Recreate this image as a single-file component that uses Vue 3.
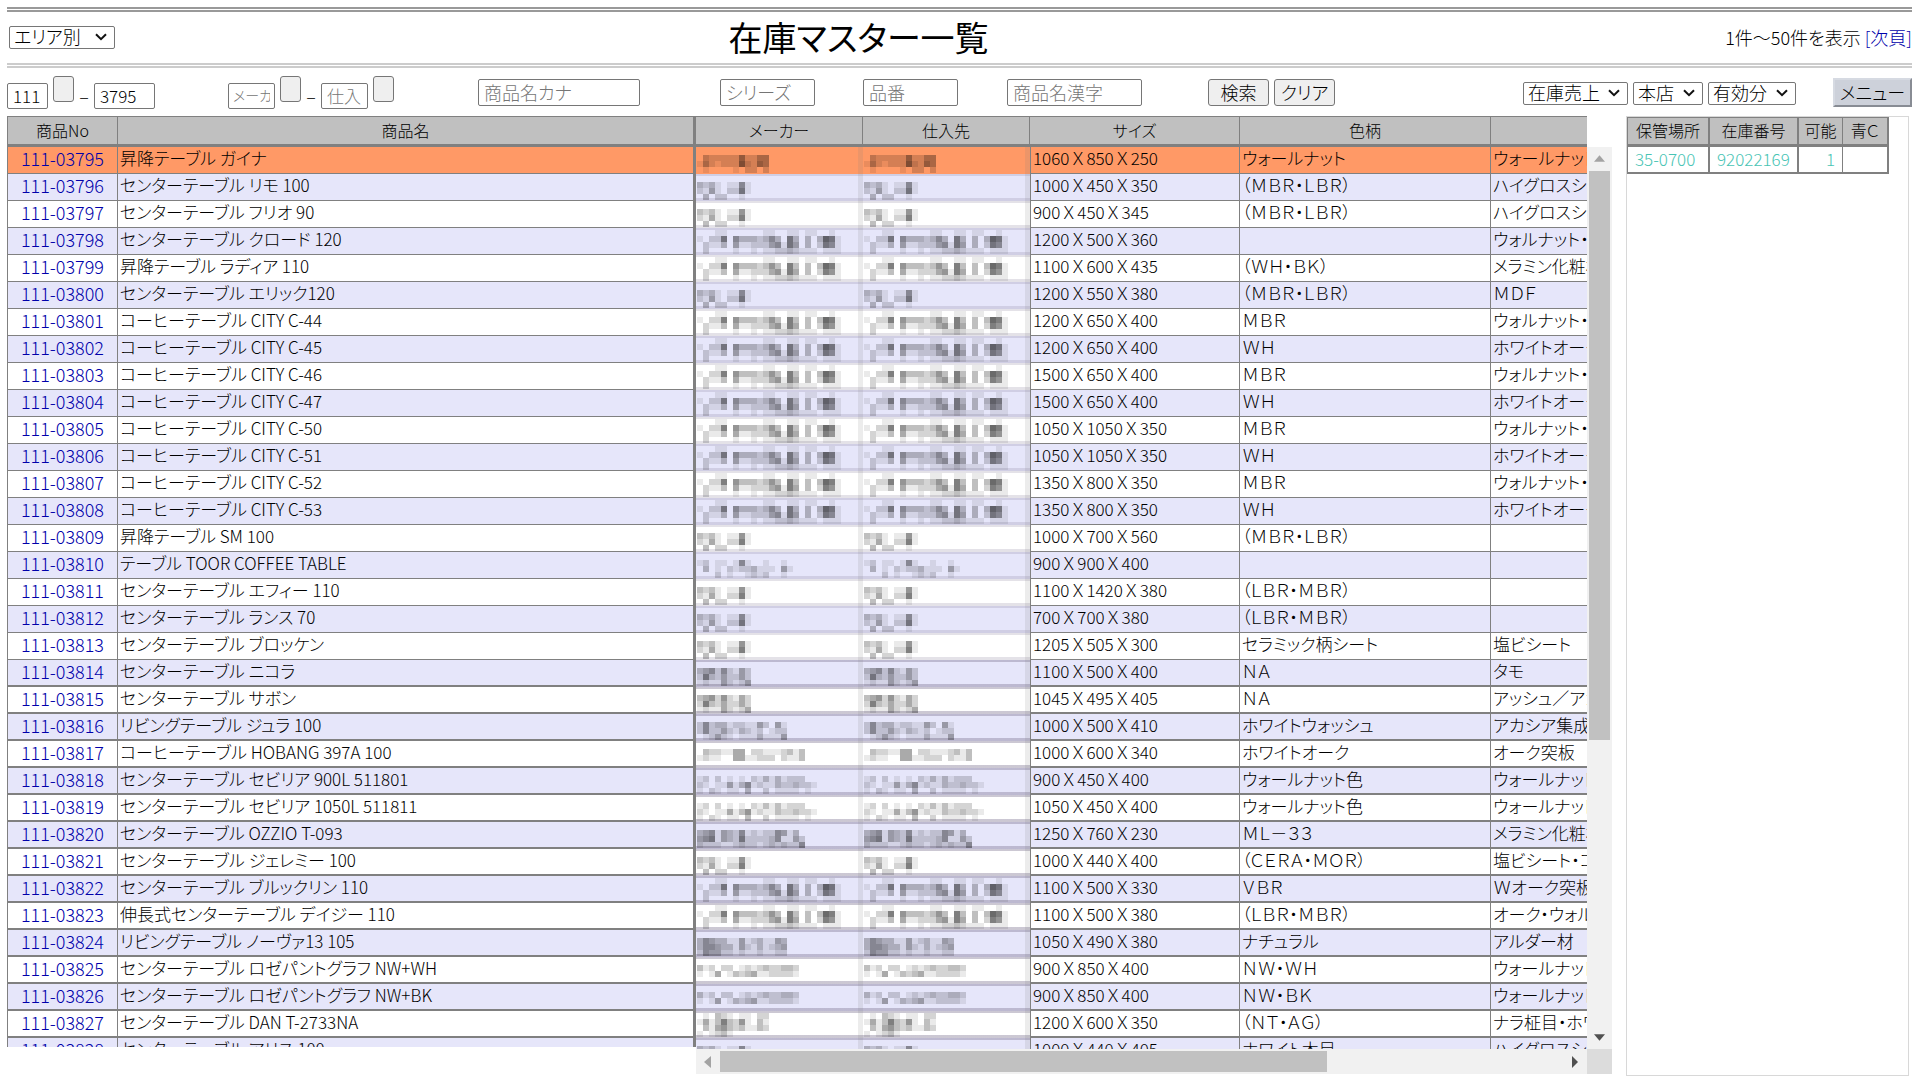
<script setup>
import { ref } from 'vue'

const code = ref('111')
const item = ref('3795')

// Masked supplier names: each digit is the darkness of one block.
const masks = {
  a: ['000000000000', '032222252244', '142122263254', '010000102202'],
  b: ['00000000', '323101151', '214102261', '030220010'],
  c: ['00011000000110011011001', '102260533323530630303761', '021130411222451640302651', '020000100101122321110111'],
  d: ['000000000000000', '120110151001001', '0301021223111041', '000201001212001'],
  e: ['000000000', '345252142', '263242242', '121142124'],
  f: ['000000000000000', '252331221142041', '252242132120122', '012421011131114'],
  g: ['000000000000000000', '032211440221112313', '121100441122202113', '000000000000000000'],
  h: ['000000000000000000', '1202010102131312220', '21011413512113223221', '1021011030020111101'],
  i: ['000000000000000000', '345143251212254130', '456143262222351142', '322211232212323225'],
  j: ['00000000000000000', '31202201212322332', '10140132341122221', '00000000000000000'],
  k: ['000000000000000', '354331141231143', '355433142131234', '254422121121122'],
  l: ['010321011022', '141363251031', '031453231132', '101231000000'],
}

const rows = [
  ['111-03795', '昇降テーブル ガイナ', 'a', '1060Ｘ850Ｘ250', 'ウォールナット', 'ウォールナット突板'],
  ['111-03796', 'センターテーブル リモ 100', 'b', '1000Ｘ450Ｘ350', '（ＭＢＲ・ＬＢＲ）', 'ハイグロスシート'],
  ['111-03797', 'センターテーブル フリオ 90', 'b', '900Ｘ450Ｘ345', '（ＭＢＲ・ＬＢＲ）', 'ハイグロスシート'],
  ['111-03798', 'センターテーブル クロード 120', 'c', '1200Ｘ500Ｘ360', '', 'ウォルナット・突板'],
  ['111-03799', '昇降テーブル ラディア 110', 'c', '1100Ｘ600Ｘ435', '（ＷＨ・ＢＫ）', 'メラミン化粧板'],
  ['111-03800', 'センターテーブル エリック120', 'b', '1200Ｘ550Ｘ380', '（ＭＢＲ・ＬＢＲ）', 'ＭＤＦ'],
  ['111-03801', 'コーヒーテーブル CITY C-44', 'c', '1200Ｘ650Ｘ400', 'ＭＢＲ', 'ウォルナット・突板'],
  ['111-03802', 'コーヒーテーブル CITY C-45', 'c', '1200Ｘ650Ｘ400', 'ＷＨ', 'ホワイトオーク'],
  ['111-03803', 'コーヒーテーブル CITY C-46', 'c', '1500Ｘ650Ｘ400', 'ＭＢＲ', 'ウォルナット・突板'],
  ['111-03804', 'コーヒーテーブル CITY C-47', 'c', '1500Ｘ650Ｘ400', 'ＷＨ', 'ホワイトオーク'],
  ['111-03805', 'コーヒーテーブル CITY C-50', 'c', '1050Ｘ1050Ｘ350', 'ＭＢＲ', 'ウォルナット・突板'],
  ['111-03806', 'コーヒーテーブル CITY C-51', 'c', '1050Ｘ1050Ｘ350', 'ＷＨ', 'ホワイトオーク'],
  ['111-03807', 'コーヒーテーブル CITY C-52', 'c', '1350Ｘ800Ｘ350', 'ＭＢＲ', 'ウォルナット・突板'],
  ['111-03808', 'コーヒーテーブル CITY C-53', 'c', '1350Ｘ800Ｘ350', 'ＷＨ', 'ホワイトオーク'],
  ['111-03809', '昇降テーブル SM 100', 'b', '1000Ｘ700Ｘ560', '（ＭＢＲ・ＬＢＲ）', ''],
  ['111-03810', 'テーブル TOOR COFFEE TABLE', 'd', '900Ｘ900Ｘ400', '', ''],
  ['111-03811', 'センターテーブル エフィー 110', 'b', '1100Ｘ1420Ｘ380', '（ＬＢＲ・ＭＢＲ）', ''],
  ['111-03812', 'センターテーブル ランス 70', 'b', '700Ｘ700Ｘ380', '（ＬＢＲ・ＭＢＲ）', ''],
  ['111-03813', 'センターテーブル ブロッケン', 'b', '1205Ｘ505Ｘ300', 'セラミック柄シート', '塩ビシート'],
  ['111-03814', 'センターテーブル ニコラ', 'e', '1100Ｘ500Ｘ400', 'ＮＡ', 'タモ'],
  ['111-03815', 'センターテーブル サボン', 'e', '1045Ｘ495Ｘ405', 'ＮＡ', 'アッシュ／アカシア'],
  ['111-03816', 'リビングテーブル ジュラ 100', 'f', '1000Ｘ500Ｘ410', 'ホワイトウォッシュ', 'アカシア集成材'],
  ['111-03817', 'コーヒーテーブル HOBANG 397A 100', 'g', '1000Ｘ600Ｘ340', 'ホワイトオーク', 'オーク突板'],
  ['111-03818', 'センターテーブル セビリア 900L 511801', 'h', '900Ｘ450Ｘ400', 'ウォールナット色', 'ウォールナット'],
  ['111-03819', 'センターテーブル セビリア 1050L 511811', 'h', '1050Ｘ450Ｘ400', 'ウォールナット色', 'ウォールナット'],
  ['111-03820', 'センターテーブル OZZIO T-093', 'i', '1250Ｘ760Ｘ230', 'ＭＬ－３３', 'メラミン化粧板'],
  ['111-03821', 'センターテーブル ジェレミー 100', 'b', '1000Ｘ440Ｘ400', '（ＣＥＲＡ・ＭＯＲ）', '塩ビシート・コルク'],
  ['111-03822', 'センターテーブル ブルックリン 110', 'c', '1100Ｘ500Ｘ330', 'ＶＢＲ', 'Ｗオーク突板'],
  ['111-03823', '伸長式センターテーブル デイジー 110', 'c', '1100Ｘ500Ｘ380', '（ＬＢＲ・ＭＢＲ）', 'オーク・ウォルナット'],
  ['111-03824', 'リビングテーブル ノーヴァ13 105', 'k', '1050Ｘ490Ｘ380', 'ナチュラル', 'アルダー材'],
  ['111-03825', 'センターテーブル ロゼパントグラフ NW+WH', 'j', '900Ｘ850Ｘ400', 'ＮＷ・ＷＨ', 'ウォールナット'],
  ['111-03826', 'センターテーブル ロゼパントグラフ NW+BK', 'j', '900Ｘ850Ｘ400', 'ＮＷ・ＢＫ', 'ウォールナット'],
  ['111-03827', 'センターテーブル DAN T-2733NA', 'l', '1200Ｘ600Ｘ350', '（ＮＴ・ＡＧ）', 'ナラ柾目・ホワイト'],
  ['111-03828', 'センターテーブル アリス 100', 'b', '1000Ｘ440Ｘ405', 'ホワイト木目', 'ハイグロスシート'],
].map(([no, name, mask, size, color, material], i) => ({
  no, name, size, color, material,
  blocks: masks[mask].flatMap((line, y) =>
    [...line].map((d, x) => ({ x: x * 6, y: y * 6, o: Number(d) / 12 })).filter((b) => b.o > 0)),
  cls: { current: i === 0, odd: i % 2 === 1, heavy: i >= 19 },
}))

const viewSelects = [
  { label: '集計', value: '在庫売上', cls: 'w-sales' },
  { label: '店舗', value: '本店', cls: 'w-shop' },
  { label: '有効区分', value: '有効分', cls: 'w-valid' },
]
</script>

<template>
  <div class="page">
    <header class="titlebar">
      <div class="drop w-area">
        <select aria-label="表示区分"><option>エリア別</option></select>
        <svg viewBox="0 0 12 8" aria-hidden="true"><path d="M1 1.2 6 6.2 11 1.2" /></svg>
      </div>
      <h1>在庫マスター一覧</h1>
      <p class="pager">1件～50件を表示 <a href="#next">[次頁]</a></p>
    </header>

    <form class="filters" @submit.prevent>
      <div class="codes">
        <input v-model="code" class="w-code" type="text" aria-label="分類コード" />
        <button type="button" class="pick" aria-label="分類を選択"></button>
        <span class="dash">–</span>
        <input v-model="item" class="w-item" type="text" aria-label="商品コード" />
      </div>
      <div class="codes makers">
        <input class="w-maker small" type="text" placeholder="メーカ" aria-label="メーカー" />
        <button type="button" class="pick" aria-label="メーカーを選択"></button>
        <span class="dash">–</span>
        <input class="w-maker" type="text" placeholder="仕入" aria-label="仕入先" />
        <button type="button" class="pick" aria-label="仕入先を選択"></button>
      </div>
      <input class="text w-kana" type="text" placeholder="商品名カナ" aria-label="商品名カナ" />
      <input class="text w-series" type="text" placeholder="シリーズ" aria-label="シリーズ" />
      <input class="text w-part" type="text" placeholder="品番" aria-label="品番" />
      <input class="text w-kanji" type="text" placeholder="商品名漢字" aria-label="商品名漢字" />
      <div class="actions">
        <button type="submit" class="act">検索</button>
        <button type="reset" class="act">クリア</button>
      </div>
      <div class="views">
        <div v-for="s in viewSelects" :key="s.value" class="drop" :class="s.cls">
          <select :aria-label="s.label"><option>{{ s.value }}</option></select>
          <svg viewBox="0 0 12 8" aria-hidden="true"><path d="M1 1.2 6 6.2 11 1.2" /></svg>
        </div>
      </div>
      <button type="button" class="menu">メニュー</button>
    </form>

    <main class="panes">
      <section class="fixed">
        <table>
          <colgroup><col class="c-no" /><col /></colgroup>
          <thead><tr><th>商品No</th><th>商品名</th></tr></thead>
          <tbody>
            <tr v-for="r in rows" :key="r.no" :class="r.cls">
              <td class="no"><a :href="'#' + r.no">{{ r.no }}</a></td>
              <td>{{ r.name }}</td>
            </tr>
          </tbody>
        </table>
      </section>

      <section class="scroller">
        <div class="view">
          <table>
            <colgroup>
              <col class="c-maker" /><col class="c-vendor" /><col class="c-size" /><col class="c-color" /><col class="c-mat" />
            </colgroup>
            <thead>
              <tr><th>メーカー</th><th>仕入先</th><th>サイズ</th><th>色柄</th><th></th></tr>
            </thead>
            <tbody>
              <tr v-for="r in rows" :key="r.no" :class="r.cls">
                <td v-for="n in 2" :key="n" class="masked">
                  <svg width="150" height="24" viewBox="0 0 150 24" shape-rendering="crispEdges" aria-hidden="true">
                    <rect v-for="(b, i) in r.blocks" :key="i" :x="b.x" :y="b.y" width="6" height="6" :fill-opacity="b.o" />
                  </svg>
                </td>
                <td class="size">{{ r.size }}</td>
                <td>{{ r.color }}</td>
                <td>{{ r.material }}</td>
              </tr>
            </tbody>
          </table>
        </div>
        <div class="vbar" aria-hidden="true">
          <svg viewBox="0 0 12 8"><path fill="#a3a3a3" d="M0 7 6 0l6 7z" /></svg>
          <div class="vtrack"><div class="vthumb"></div></div>
          <svg viewBox="0 0 12 8"><path fill="#505050" d="M0 1h12L6 8z" /></svg>
        </div>
        <div class="hbar" aria-hidden="true">
          <svg viewBox="0 0 8 12"><path fill="#a3a3a3" d="M7 0v12L0 6z" /></svg>
          <div class="htrack"><div class="hthumb"></div></div>
          <svg viewBox="0 0 8 12"><path fill="#505050" d="M1 0v12l6-6z" /></svg>
        </div>
        <div class="corner"></div>
      </section>

      <aside class="stock">
        <table>
          <colgroup><col class="s-place" /><col class="s-num" /><col class="s-free" /><col class="s-blue" /></colgroup>
          <thead><tr><th>保管場所</th><th>在庫番号</th><th>可能</th><th>青Ｃ</th></tr></thead>
          <tbody><tr><td>35-0700</td><td>92022169</td><td class="num">1</td><td></td></tr></tbody>
        </table>
      </aside>
    </main>
  </div>
</template>

<style>
body {
  margin: 0;
  background: #fff;
}
</style>

<style scoped>
.page {
  box-sizing: border-box;
  height: 100vh;
  padding: 7px 8px 4px 7px;
  display: flex;
  flex-direction: column;
  font-family: "Noto Sans CJK JP", "Liberation Sans", sans-serif;
  font-feature-settings: "palt";
  font-weight: 300;
  font-size: 18px;
  line-height: 22px;
  color: #000;
  overflow: hidden;
}
input, select, button {
  box-sizing: border-box;
  margin: 0;
  font: inherit;
  font-feature-settings: inherit;
  color: #000;
}
a {
  color: #0000aa;
  text-decoration: none;
}

.titlebar {
  display: grid;
  grid-template-columns: 30% 29.4% 1fr;
  align-items: center;
  box-sizing: border-box;
  height: 61px;
  padding-bottom: 2px;
  border-top: 5px double #999;
  border-bottom: 5px double #ccc;
}
.titlebar .drop {
  margin-left: 2px;
}
h1 {
  margin: 0;
  font-size: 34px;
  font-weight: 400;
  line-height: 40px;
  text-align: center;
}
.pager {
  margin: 0;
  text-align: right;
}

.drop {
  position: relative;
  height: 23px;
}
.drop select {
  width: 100%;
  height: 100%;
  padding: 0 4px 2px;
  border: 1px solid #767676;
  border-radius: 2px;
  background: #fff;
  appearance: none;
  line-height: 19px;
}
.drop svg {
  position: absolute;
  right: 8px;
  top: 8px;
  width: 12px;
  height: 8px;
  fill: none;
  stroke: #111;
  stroke-width: 2;
  pointer-events: none;
}
.w-area { width: 106px; }
.w-sales { width: 105px; }
.w-shop { width: 70px; }
.w-valid { width: 88px; }

.filters {
  display: flex;
  align-items: flex-start;
  box-sizing: border-box;
  height: 48px;
  padding-top: 8px;
}
.filters input {
  border: 1px solid #767676;
  border-radius: 2px;
  background: #fff;
  padding: 0 5px 2px;
}
.filters input::placeholder {
  color: #757575;
}
.codes {
  display: flex;
  align-items: flex-end;
  height: 33px;
}
.codes input {
  height: 26px;
  font-size: 17px;
}
.codes .small {
  padding: 0 4px 2px;
  font-size: 14px;
}
.codes .pick {
  align-self: flex-start;
  width: 21px;
  height: 26px;
  margin-left: 5px;
  padding: 0;
}
.dash {
  width: 20px;
  padding-bottom: 2px;
  text-align: center;
}
.makers { margin-left: 73px; }
.w-code { width: 41px; }
.w-item { width: 61px; }
.w-maker { width: 47px; }
.text {
  height: 27px;
  margin-top: 3px;
}
.w-kana { width: 162px; margin-left: 84px; }
.w-series { width: 95px; margin-left: 80px; }
.w-part { width: 95px; margin-left: 48px; }
.w-kanji { width: 135px; margin-left: 49px; }
.pick, .act {
  border: 1px solid #767676;
  border-radius: 3px;
  background: #efefef;
}
.actions {
  display: flex;
  gap: 5px;
  margin: 3px 0 0 66px;
}
.act {
  width: 61px;
  height: 27px;
  padding: 0 0 2px;
}
.views {
  display: flex;
  gap: 5px;
  margin: 5px 37px 0 auto;
}
.menu {
  width: 79px;
  height: 29px;
  margin-top: 2px;
  padding: 0 0 2px;
  border: 2px solid;
  border-color: #d6dae2 #888c94 #888c94 #d6dae2;
  background: #cdd1da;
}

.panes {
  flex: 1;
  min-height: 0;
  display: flex;
}
table {
  border-collapse: separate;
  border-spacing: 0;
  table-layout: fixed;
}
th, td {
  box-sizing: border-box;
  white-space: nowrap;
  border-right: 1px solid #808080;
}
th {
  height: 31px;
  padding: 0 0 2px;
  background: #c0c0c0;
  border-top: 1px solid #808080;
  border-bottom: 3px solid #808080;
  font-size: 16px;
  font-weight: 300;
  line-height: 24px;
}
td {
  height: 27px;
  padding: 0 2px 4px;
  border-bottom: 1px solid #808080;
  line-height: 22px;
  font-size: 17px;
}
.heavy td {
  padding-bottom: 3px;
  border-bottom-width: 2px;
}
.odd td { background-color: #e6e6fa; }
.current td { background-color: #ff9966; }

.fixed {
  box-sizing: border-box;
  width: 689px;
  margin-bottom: 29px;
  border-left: 1px solid #808080;
  border-right: 3px solid #808080;
  overflow: hidden;
}
.fixed table { width: 100%; }
.fixed th:last-child, .fixed td:last-child { border-right: 0; }
.c-no { width: 110px; }
.no {
  text-align: center;
  font-size: 18px;
}
.size { font-feature-settings: normal; }

.scroller {
  flex: 1;
  min-width: 0;
  margin-bottom: 2px;
  display: grid;
  grid-template-columns: minmax(0, 1fr) 25px;
  grid-template-rows: minmax(0, 1fr) 25px;
}
.view { overflow: hidden; }
.view table { width: 1400px; }
.c-maker { width: 167px; }
.c-vendor { width: 167px; }
.c-size { width: 210px; }
.c-color { width: 251px; }
.masked, .heavy .masked {
  padding: 0 1px;
  border-right: 5px solid rgba(128, 128, 128, .15);
  border-bottom: 0;
  line-height: 0;
  background-image: linear-gradient(rgba(120, 110, 140, .2) 2px, transparent 2px, transparent 24px, rgba(120, 110, 140, .2) 24px);
}
.masked + .masked + td { border-left: 1px solid #808080; }
.current .masked { background-image: none; }
.heavy .masked { background-image: linear-gradient(rgba(120, 110, 140, .38) 2px, transparent 2px, transparent 24px, rgba(120, 110, 140, .38) 24px); }
.masked svg { display: block; }

.vbar, .hbar {
  display: flex;
  align-items: center;
  background: #f1f1f1;
}
.vbar {
  flex-direction: column;
  margin-top: 31px;
  padding: 8px 0;
  gap: 8px;
}
.vbar svg { width: 11px; height: 8px; }
.vtrack { flex: 1; width: 21px; }
.vthumb { height: calc(200% / 3); background: #c1c1c1; }
.hbar { padding: 0 8px; gap: 8px; }
.hbar svg { width: 8px; height: 12px; }
.htrack { flex: 1; height: 21px; }
.hthumb { width: 72%; height: 100%; background: #c1c1c1; }
.corner { background: #dcdcdc; }

.stock {
  box-sizing: border-box;
  width: 283px;
  margin: 0 3px 0 14px;
  border: 1px solid #d8d8d8;
}
.stock table {
  width: 262px;
  border: 1px solid #808080;
  border-top: 0;
  border-right: 2px solid #808080;
  border-bottom: 2px solid #808080;
}
.stock th { height: 30px; }
.stock td {
  height: 25px;
  padding: 0 7px 2px;
  border-bottom: 0;
  color: #48c4b4;
}
.stock th:last-child, .stock td:last-child { border-right: 0; }
.stock th:nth-child(-n+2), .stock td:nth-child(-n+2) { border-right-width: 2px; }
.stock .num { text-align: right; }
.s-place { width: 82px; }
.s-num { width: 89px; }
.s-free { width: 44px; }
</style>
